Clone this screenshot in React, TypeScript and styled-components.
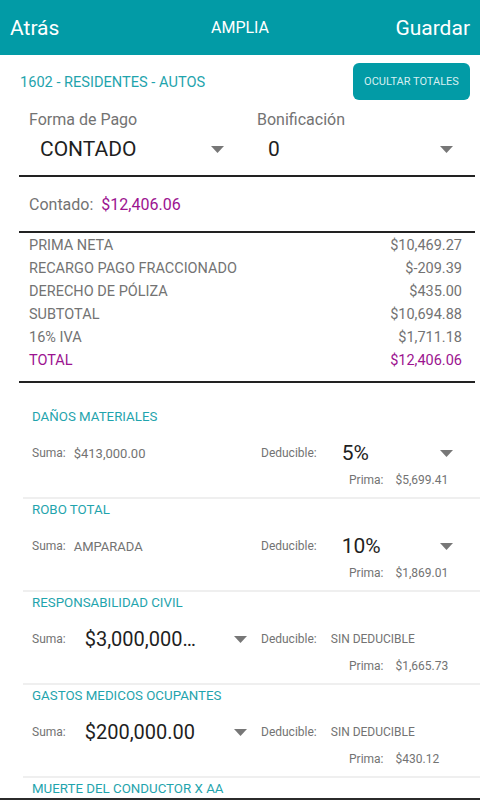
import React from "react";
import styled, {createGlobalStyle} from "styled-components";

const TEAL = "#029ba6";
const TEAL_TEXT = "#1fa4ad";
const PURPLE = "#9c1390";
const GRAY = "#737373";
const DARK = "#1f1f1f";

const GlobalStyle = createGlobalStyle`
  body {
    margin: 0;
    background: #ffffff;
    font-family: Roboto, "Noto Sans", "Liberation Sans", sans-serif;
  }
`;

const Screen = styled.div`
  width: 480px;
  height: 800px;
  display: flex;
  flex-direction: column;
  overflow: hidden;
  background: #fff;
  border-bottom: 2px solid #2b2b2b;
  box-sizing: border-box;
`;

const Header = styled.header`
  height: 55px;
  flex-shrink: 0;
  background: ${TEAL};
  color: #fff;
  display: grid;
  grid-template-columns: 1fr auto 1fr;
  align-items: center;
  padding: 0 10px;
`;

const HeaderAction = styled.span<{ $right?: boolean }>`
  font-size: 21px;
  text-align: ${(p) => (p.$right ? "right" : "left")};
`;

const HeaderTitle = styled.span`
  font-size: 16px;
`;

const TopRow = styled.div`
  display: flex;
  align-items: center;
  justify-content: space-between;
  padding: 8px 10px 0 20px;
`;

const PlanName = styled.span`
  font-size: 14.6px;
  color: ${TEAL_TEXT};
`;

const HideButton = styled.button`
  width: 117px;
  height: 37px;
  border: none;
  border-radius: 6px;
  background: ${TEAL};
  color: #d6eff1;
  font-family: inherit;
  font-size: 11px;
  padding: 0;
`;

const PaymentGrid = styled.div`
  display: grid;
  grid-template-columns: 199px 1fr;
  column-gap: 29px;
  margin: 0 5px 0 19px;
  padding: 10px 18px 12px 10px;
  border-bottom: 2px solid #222;
`;

const FieldLabel = styled.div`
  font-size: 16px;
  line-height: 19px;
  color: ${GRAY};
`;

const SelectBox = styled.div<{ $size: number; $arrowGap: number }>`
  display: flex;
  align-items: center;
  min-width: 0;
  flex: 1;
  height: 28px;
  padding: 0 4px 0 11px;
  font-size: ${(p) => p.$size}px;
  color: ${DARK};

  span {
    flex: 1;
    min-width: 0;
    white-space: nowrap;
    overflow: hidden;
    text-overflow: ellipsis;
    margin-right: ${(p) => p.$arrowGap}px;
  }
`;

const PaymentSelect = styled(SelectBox)`
  margin-top: 6px;
`;

const Arrow = () => (
  <svg width="13" height="7" viewBox="0 0 13 7" style={{flexShrink: 0}}>
    <path d="M0 0 L13 0 L6.5 7 Z" fill="#777" />
  </svg>
);

const ContadoRow = styled.div`
  margin: 0 5px 0 19px;
  padding: 18px 10px 17px;
  font-size: 16px;
  line-height: 19px;
  color: ${GRAY};
  border-bottom: 2px solid #222;

  b {
    font-weight: 400;
    color: ${PURPLE};
    margin-left: 8px;
  }
`;

const Totals = styled.div`
  margin: 0 5px 0 19px;
  padding: 1px 13px 9px 10px;
  border-bottom: 2px solid #222;
`;

const TotalLine = styled.div<{ $accent?: boolean }>`
  display: flex;
  justify-content: space-between;
  align-items: center;
  height: 23px;
  font-size: 14.5px;
  color: ${(p) => (p.$accent ? PURPLE : GRAY)};
`;

const CoverageList = styled.div`
  padding-top: 21px;
`;

const Coverage = styled.section`
  margin-left: 23px;
  padding: 2px 0 9px 9px;
  border-top: 2px solid #efefef;

  &:first-child {
    border-top-color: transparent;
  }
`;

const CoverageTitle = styled.div`
  font-size: 13.3px;
  line-height: 17px;
  color: ${TEAL_TEXT};
  white-space: nowrap;
`;

const CoverageRow = styled.div`
  display: grid;
  grid-template-columns: 219px 1fr;
  column-gap: 10px;
  height: 30px;
  margin-top: 13px;
  padding-right: 23px;
`;

const Cell = styled.div`
  display: flex;
  align-items: center;
  min-width: 0;
`;

const SmallLabel = styled.span<{ $gap: number }>`
  font-size: 12px;
  color: ${GRAY};
  flex-shrink: 0;
  margin-right: ${(p) => p.$gap}px;
`;

const PlainValue = styled.span<{ $size?: number }>`
  font-size: ${(p) => p.$size ?? 13}px;
  color: ${GRAY};
  white-space: nowrap;
`;

const PrimaRow = styled.div`
  display: flex;
  align-items: center;
  height: 16px;
  margin-top: 4px;
  padding-left: 317px;
  font-size: 12px;
  color: ${GRAY};

  span + span {
    margin-left: 12px;
  }
`;

type Item = {
  title: string;
  suma: string;
  sumaSelect?: boolean;
  deducible: string;
  deducibleSelect?: boolean;
  prima: string;
};

const coverages: Item[] = [
  {title: "DAÑOS MATERIALES", suma: "$413,000.00", deducible: "5%", deducibleSelect: true, prima: "$5,699.41"},
  {title: "ROBO TOTAL", suma: "AMPARADA", deducible: "10%", deducibleSelect: true, prima: "$1,869.01"},
  {title: "RESPONSABILIDAD CIVIL", suma: "$3,000,000.00", sumaSelect: true, deducible: "SIN DEDUCIBLE", prima: "$1,665.73"},
  {title: "GASTOS MEDICOS OCUPANTES", suma: "$200,000.00", sumaSelect: true, deducible: "SIN DEDUCIBLE", prima: "$430.12"},
  {title: "MUERTE DEL CONDUCTOR X AA", suma: "$100,000.00", deducible: "SIN DEDUCIBLE", prima: "$50.00"},
];

const totals = [
  ["PRIMA NETA", "$10,469.27"],
  ["RECARGO PAGO FRACCIONADO", "$-209.39"],
  ["DERECHO DE PÓLIZA", "$435.00"],
  ["SUBTOTAL", "$10,694.88"],
  ["16% IVA", "$1,711.18"],
];

export default function App() {
  return (
    <Screen>
      <GlobalStyle />
      <Header>
        <HeaderAction>Atrás</HeaderAction>
        <HeaderTitle>AMPLIA</HeaderTitle>
        <HeaderAction $right>Guardar</HeaderAction>
      </Header>

      <TopRow>
        <PlanName>1602 - RESIDENTES - AUTOS</PlanName>
        <HideButton>OCULTAR TOTALES</HideButton>
      </TopRow>

      <PaymentGrid>
        <div>
          <FieldLabel>Forma de Pago</FieldLabel>
          <PaymentSelect $size={21} $arrowGap={10}>
            <span>CONTADO</span>
            <Arrow />
          </PaymentSelect>
        </div>
        <div>
          <FieldLabel>Bonificación</FieldLabel>
          <PaymentSelect $size={21} $arrowGap={10}>
            <span>0</span>
            <Arrow />
          </PaymentSelect>
        </div>
      </PaymentGrid>

      <ContadoRow>
        Contado:<b>$12,406.06</b>
      </ContadoRow>

      <Totals>
        {totals.map(([label, value]) => (
          <TotalLine key={label}>
            <span>{label}</span>
            <span>{value}</span>
          </TotalLine>
        ))}
        <TotalLine $accent>
          <span>TOTAL</span>
          <span>$12,406.06</span>
        </TotalLine>
      </Totals>

      <CoverageList>
        {coverages.map((c) => (
          <Coverage key={c.title}>
            <CoverageTitle>{c.title}</CoverageTitle>
            <CoverageRow>
              <Cell>
                <SmallLabel $gap={8}>Suma:</SmallLabel>
                {c.sumaSelect ? (
                  <SelectBox $size={20} $arrowGap={34}>
                    <span>{c.suma}</span>
                    <Arrow />
                  </SelectBox>
                ) : (
                  <PlainValue>{c.suma}</PlainValue>
                )}
              </Cell>
              <Cell>
                <SmallLabel $gap={14}>Deducible:</SmallLabel>
                {c.deducibleSelect ? (
                  <SelectBox $size={21} $arrowGap={10}>
                    <span>{c.deducible}</span>
                    <Arrow />
                  </SelectBox>
                ) : (
                  <PlainValue $size={12}>{c.deducible}</PlainValue>
                )}
              </Cell>
            </CoverageRow>
            <PrimaRow>
              <span>Prima:</span>
              <span>{c.prima}</span>
            </PrimaRow>
          </Coverage>
        ))}
      </CoverageList>
    </Screen>
  );
}
